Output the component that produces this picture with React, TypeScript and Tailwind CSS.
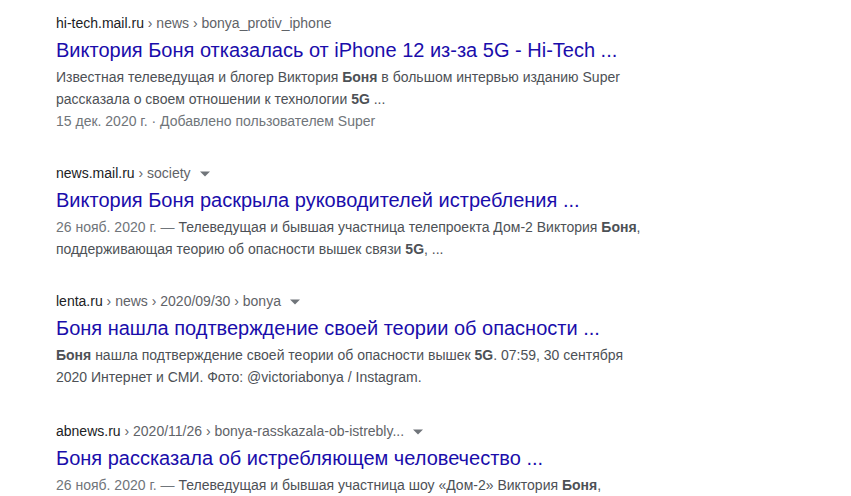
import React from "react"

type Result = {
  domain: string
  path: string[]
  arrow: boolean
  title: string
  lines: React.ReactNode[]
  gap: string
}

const Arrow = () => (
  <span className="ml-[9px] inline-block align-middle">
    <svg width="10" height="6" viewBox="0 0 10 6" className="block">
      <path d="M0 0.5 L10 0.5 L5 5.5 Z" fill="#70757a" />
    </svg>
  </span>
)

const Date = ({ children }: { children: React.ReactNode }) => (
  <span className="text-[#70757a]">{children}</span>
)

const results: Result[] = [
  {
    domain: "hi-tech.mail.ru",
    path: ["news", "bonya_protiv_iphone"],
    arrow: false,
    gap: "mt-0",
    title: "Виктория Боня отказалась от iPhone 12 из-за 5G - Hi-Tech ...",
    lines: [
      <>Известная телеведущая и блогер Виктория <b>Боня</b> в большом интервью изданию Super</>,
      <>рассказала о своем отношении к технологии <b>5G</b> ...</>,
      <Date>15 дек. 2020 г. · Добавлено пользователем Super</Date>,
    ],
  },
  {
    domain: "news.mail.ru",
    path: ["society"],
    arrow: true,
    gap: "mt-[32px]",
    title: "Виктория Боня раскрыла руководителей истребления ...",
    lines: [
      <><Date>26 нояб. 2020 г. — </Date>Телеведущая и бывшая участница телепроекта Дом-2 Виктория <b>Боня</b>,</>,
      <>поддерживающая теорию об опасности вышек связи <b>5G</b>, ...</>,
    ],
  },
  {
    domain: "lenta.ru",
    path: ["news", "2020/09/30", "bonya"],
    arrow: true,
    gap: "mt-[32px]",
    title: "Боня нашла подтверждение своей теории об опасности ...",
    lines: [
      <><b>Боня</b> нашла подтверждение своей теории об опасности вышек <b>5G</b>. 07:59, 30 сентября</>,
      <>2020 Интернет и СМИ. Фото: @victoriabonya / Instagram.</>,
    ],
  },
  {
    domain: "abnews.ru",
    path: ["2020/11/26", "bonya-rasskazala-ob-istrebly..."],
    arrow: true,
    gap: "mt-[34px]",
    title: "Боня рассказала об истребляющем человечество ...",
    lines: [
      <><Date>26 нояб. 2020 г. — </Date>Телеведущая и бывшая участница шоу «Дом-2» Виктория <b>Боня</b>,</>,
      <>поддерживающая теорию об опасности вышек связи <b>5G</b> ...</>,
    ],
  },
]

export default function App() {
  return (
    <div className="w-[851px] h-[496px] overflow-hidden bg-white pl-[56px] pt-[14px] font-['Liberation_Sans',Arial,sans-serif]">
      {results.map((r) => (
        <div key={r.domain} className={`w-[640px] ${r.gap}`}>
          <div className="text-[14px] leading-[18px] whitespace-nowrap">
            <span className="text-[#202124]">{r.domain}</span>
            <span className="text-[#5f6368]">{r.path.map((p) => `\u00a0› ${p}`).join("")}</span>
            {r.arrow && <Arrow />}
          </div>
          <h3 className="mt-[5px] text-[20px] leading-[26px] text-[#1a0dab] whitespace-nowrap">{r.title}</h3>
          <div className="mt-[3px] text-[14px] leading-[22px] text-[#4d5156] whitespace-nowrap">
            {r.lines.map((l, i) => (
              <div key={i}>{l}</div>
            ))}
          </div>
        </div>
      ))}
    </div>
  )
}
